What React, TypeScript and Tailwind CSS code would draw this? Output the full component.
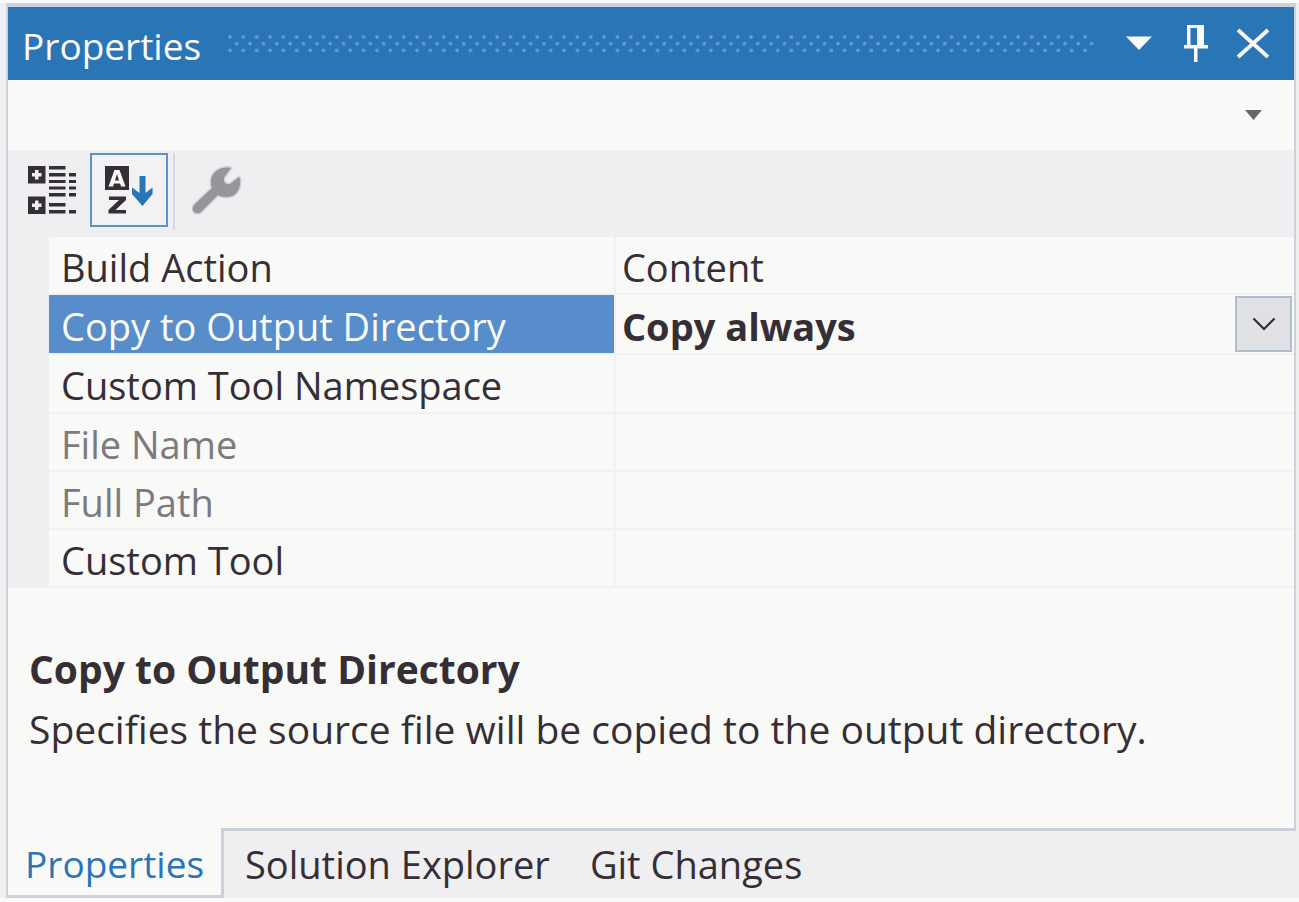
import { useState } from "react";

const properties = [
  { name: "Build Action", value: "Content" },
  { name: "Copy to Output Directory", value: "Copy always", selected: true },
  { name: "Custom Tool Namespace", value: "" },
  { name: "File Name", value: "", readOnly: true },
  { name: "Full Path", value: "", readOnly: true },
  { name: "Custom Tool", value: "" },
];

const inactiveTabs = ["Solution Explorer", "Git Changes"];

function GripDots() {
  return (
    <svg className="h-5 min-w-0 flex-1" aria-hidden="true">
      <defs>
        <pattern id="grip" width="13.36" height="20" patternUnits="userSpaceOnUse">
          <g fill="#6399d0">
            <circle cx="2" cy="3" r="1.9" />
            <circle cx="8.7" cy="9.7" r="1.9" />
            <circle cx="2" cy="16.4" r="1.9" />
          </g>
        </pattern>
      </defs>
      <rect width="100%" height="20" fill="url(#grip)" />
    </svg>
  );
}

function TitleBar() {
  return (
    <header className="flex h-[73px] items-center bg-[#2a75b6] pr-6 pl-[14px] text-[#fafaf8]">
      <h1 className="mr-[27px] pt-1 text-[37px] leading-[68px]">Properties</h1>
      <GripDots />
      <button type="button" aria-label="Window position" className="ml-[30px]">
        <svg width="26" height="73" viewBox="0 2 26 73" fill="currentColor">
          <path d="M0 31.500h26L13 45z" />
        </svg>
      </button>
      <button type="button" aria-label="Auto hide" className="ml-8">
        <svg width="24" height="73" viewBox="0 2 24 73" fill="currentColor">
          <path fillRule="evenodd" d="M3 20h17v20h4v3.500H13.500V57H10V43.500H0V40h3zM6.500 23v17h6.500V23z" />
        </svg>
      </button>
      <button type="button" aria-label="Close" className="ml-7">
        <svg width="34" height="73" viewBox="0 2 34 73" fill="none" stroke="currentColor" strokeWidth="3.800">
          <path d="M2 25 32 52M32 25 2 52" />
        </svg>
      </button>
    </header>
  );
}

function ObjectPicker() {
  return (
    <div className="relative">
      <select aria-label="Selected object" className="block h-[70px] w-full appearance-none bg-[#fafaf8] px-4 outline-none">
        <option value=""></option>
      </select>
      <svg className="pointer-events-none absolute top-[29px] right-8" width="17" height="12" viewBox="0 0 17 12">
        <path d="M0 1h17l-8.500 10z" fill="#6c6468" />
      </svg>
    </div>
  );
}

function CategorizedIcon() {
  return (
    <svg width="48" height="48" viewBox="0 0 48 48" fill="#362e35">
      <path fillRule="evenodd" d="M0 0h17.500v17.500H0zM7 4v3H4v3.500h3v3h3.500v-3h3V7h-3V4z" />
      <path fillRule="evenodd" d="M0 30.500h17.500V48H0zM7 34.500v3H4V41h3v3h3.500v-3h3v-3.500h-3v-3z" />
      <path d="M21 0h16.500v3.500H21zM21 7h16.500v3.500H21zM21 14h16.500v3H21zM21 20.500h16.500v3H21zM21 27h16.500v3.500H21zM21 37h16.500v3.500H21zM21 44h16.500v3.500H21zM41 7h7v3.500h-7zM41 14h7v3h-7zM41 20.500h7v3h-7zM41 27h7v3.500h-7zM41 44h7v3.500h-7z" />
    </svg>
  );
}

function AlphabeticalIcon() {
  return (
    <svg width="50" height="48" viewBox="0 0 50 48" fill="#362e35">
      <path d="M0 0h24v24H0z" />
      <path fillRule="evenodd" d="M9.500 4h5L20.500 20.500H16l-1-3H9l-1 3H3.500zM12 8l-2 6.500h4z" fill="#fafaf8" />
      <path d="M4 30.500h17V34L10.500 44H21v3.500H3.500V44L14 34H4z" />
      <path d="M34.500 10h6v17l7-5.500V28L37.500 40 27 28v-6.500l7.500 5.500z" fill="#2a75b6" />
    </svg>
  );
}

function WrenchIcon() {
  return (
    <svg width="50" height="49" viewBox="0 0 50 49">
      <path
        d="M39 2C30 0 20 5 19 14c0 4 0 6 1 8L3 38c-6 6 1 12 6 8l17-17c3 2 6 2 10 2 9-1 13-9 12-18l-1-2-9 7c-5 1-8-4-5-8z"
        fill="#96959a"
        stroke="#cfd4dc"
        strokeWidth="3"
        strokeLinejoin="round"
        paintOrder="stroke"
      />
    </svg>
  );
}

function Toolbar() {
  return (
    <div role="toolbar" aria-label="Property view" className="flex h-[87px] items-start bg-[#efeff2] pt-[3px] pl-5">
      <button type="button" aria-label="Categorized" className="flex h-[74px] items-center">
        <CategorizedIcon />
      </button>
      <button
        type="button"
        aria-label="Alphabetical"
        aria-pressed="true"
        className="ml-[14px] flex h-[74px] w-[78px] items-center border-2 border-[#5b93cc] bg-[#f2f2f4] pl-[13px]"
      >
        <AlphabeticalIcon />
      </button>
      <div className="ml-[5px] h-[77px] w-[2px] bg-[#d8d9dd]" />
      <button type="button" aria-label="Property pages" className="ml-[17px] flex h-[74px] items-center">
        <WrenchIcon />
      </button>
    </div>
  );
}

function PropertyGrid() {
  const [copy, setCopy] = useState("Copy always");
  return (
    <div className="bg-[#efeff2] pl-[41px]">
      <table className="h-[351px] w-full table-fixed border-collapse bg-[#f9f9f8] text-left leading-[50px]">
        <colgroup>
          <col className="w-5/11" />
          <col />
        </colgroup>
        <tbody>
          {properties.map((p) => (
            <tr key={p.name} className="border-b-2 border-[#f1f1f3]">
              <th
                scope="row"
                className={
                  p.selected
                    ? "border-r-2 border-[#f1f1f3] bg-[#568dca] p-0 pt-1 pl-3 font-normal whitespace-nowrap text-[#fafaf8]"
                    : p.readOnly
                      ? "border-r-2 border-[#f1f1f3] p-0 pt-1 pl-3 font-normal whitespace-nowrap text-[#7c7a7d]"
                      : "border-r-2 border-[#f1f1f3] p-0 pt-1 pl-3 font-normal whitespace-nowrap"
                }
              >
                {p.name}
              </th>
              {p.selected ? (
                <td className="p-0 pl-[6px]">
                  <div className="relative">
                    <select
                      aria-label={p.name}
                      value={copy}
                      onChange={(e) => setCopy(e.target.value)}
                      className="block h-14 w-full appearance-none bg-transparent pt-1 font-bold outline-none"
                    >
                      <option>Copy always</option>
                      <option>Copy if newer</option>
                      <option>Do not copy</option>
                    </select>
                    <span className="pointer-events-none absolute top-0 right-[2px] flex h-14 w-[57px] items-center justify-center border-2 border-[#aebfd0] bg-[#dfe1e5]">
                      <svg width="24" height="14" viewBox="0 0 24 14" fill="none" stroke="#362e35" strokeWidth="2.200">
                        <path d="M1.500 1.500 12 12 22.500 1.500" />
                      </svg>
                    </span>
                  </div>
                </td>
              ) : (
                <td className="p-0 pt-1 pl-[6px]">{p.value}</td>
              )}
            </tr>
          ))}
        </tbody>
      </table>
    </div>
  );
}

export default function App() {
  return (
    <div className="bg-[#fafaf8] pt-[3px] pb-1 font-['Open_Sans',sans-serif] text-[38px] leading-[56px] text-[#362e35]">
      <div className="bg-[#efeff2] pr-[3px] pl-[6px]">
        <main className="border-x-[2px] border-t-[4px] border-[#ccd2db] bg-[#f9f9f8]">
          <TitleBar />
          <ObjectPicker />
          <Toolbar />
          <PropertyGrid />
          <section className="h-[240px] px-[21px] pt-[51px] text-[39px] leading-[60px]">
            <h2 className="font-bold">Copy to Output Directory</h2>
            <p>Specifies the source file will be copied to the output directory.</p>
          </section>
        </main>
        <nav className="flex h-[70px]" aria-label="Tool windows">
          <a
            href="#properties"
            aria-current="page"
            className="w-[218px] border-r-[3px] border-b-[3px] border-l-2 border-[#ccd2db] bg-[#f9f9f8] pt-2 pl-[17px] text-[37px] text-[#2a75b6]"
          >
            Properties
          </a>
          <div className="flex flex-1 gap-10 border-t-[3px] border-[#ccd2db] pt-[5px] pl-[21px]">
            {inactiveTabs.map((t) => (
              <a key={t} href="#tab">
                {t}
              </a>
            ))}
          </div>
        </nav>
      </div>
    </div>
  );
}
